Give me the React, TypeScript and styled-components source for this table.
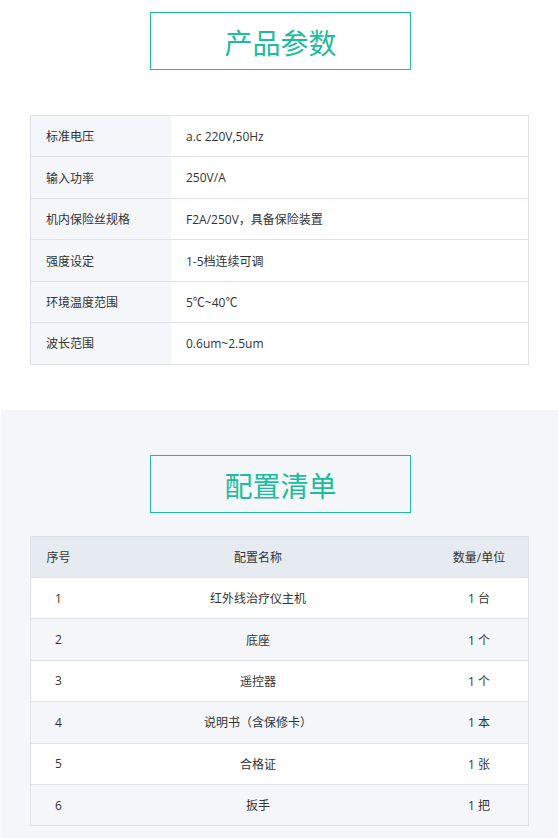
import { styled, createGlobalStyle } from 'styled-components'

const GlobalStyle = createGlobalStyle`
  html, body {
    margin: 0;
    padding: 0;
    background: #ffffff;
    font-family: 'Open Sans', 'Noto Sans CJK SC', sans-serif;
    color: #333333;
  }
`

const params = [
  ['标准电压', 'a.c 220V,50Hz'],
  ['输入功率', '250V/A'],
  ['机内保险丝规格', 'F2A/250V，具备保险装置'],
  ['强度设定', '1-5档连续可调'],
  ['环境温度范围', '5℃~40℃'],
  ['波长范围', '0.6um~2.5um'],
]

const items = [
  ['1', '红外线治疗仪主机', '1 台'],
  ['2', '底座', '1 个'],
  ['3', '遥控器', '1 个'],
  ['4', '说明书（含保修卡）', '1 本'],
  ['5', '合格证', '1 张'],
  ['6', '扳手', '1 把'],
]

const App = () => {
  return (
    <Page>
      <GlobalStyle />
      <Section>
        <Title>产品参数</Title>
        <Table>
          {params.map(([k, v]) => (
            <ParamRow key={k}>
              <Label>{k}</Label>
              <Value>{v}</Value>
            </ParamRow>
          ))}
        </Table>
      </Section>
      <Section $gray>
        <Title $gray>配置清单</Title>
        <Table $gray>
          <ListRow $head>
            <Cell>序号</Cell>
            <Cell>配置名称</Cell>
            <Cell>数量/单位</Cell>
          </ListRow>
          {items.map(([n, name, qty], idx) => (
            <ListRow key={n} $alt={idx % 2 === 1}>
              <Cell>{n}</Cell>
              <Cell>{name}</Cell>
              <Cell>{qty}</Cell>
            </ListRow>
          ))}
        </Table>
      </Section>
    </Page>
  )
}

export default App

const Page = styled.div`
  width: 558px;
  display: flex;
  flex-direction: column;
`

const Section = styled.div<{ $gray?: boolean }>`
  background: ${props => (props.$gray ? '#f5f6fa' : '#ffffff')};
  margin-left: ${props => (props.$gray ? '1px' : '0')};
  padding: ${props => (props.$gray ? '45px 0 12px' : '12px 0 45px')};
  display: flex;
  flex-direction: column;
`

// the gray section is shifted 1px right, so inner offsets drop by 1
const Title = styled.div<{ $gray?: boolean }>`
  box-sizing: border-box;
  width: 261px;
  height: 58px;
  margin-left: ${props => (props.$gray ? '149px' : '150px')};
  margin-bottom: ${props => (props.$gray ? '23px' : '45px')};
  border: 1px solid #1dbc9c;
  color: #1dbc9c;
  font-family: 'Noto Sans CJK SC', sans-serif;
  font-size: 28px;
  line-height: 58px;
  text-align: center;
`

const Table = styled.div<{ $gray?: boolean }>`
  box-sizing: border-box;
  width: 499px;
  margin-left: ${props => (props.$gray ? '29px' : '30px')};
  border: 1px solid #dde1e8;
  border-bottom: none;
  font-size: 12px;
`

const ParamRow = styled.div`
  display: grid;
  grid-template-columns: 140px 1fr;
  height: 41.45px;
  box-sizing: border-box;
  border-bottom: 1px solid #dde1e8;
`

const Label = styled.div`
  background: #f5f6fa;
  padding: 0 15px;
  display: flex;
  align-items: center;
`

const Value = styled.div`
  background: #ffffff;
  padding: 0 15px;
  display: flex;
  align-items: center;
`

const ListRow = styled.div<{ $head?: boolean; $alt?: boolean }>`
  display: grid;
  grid-template-columns: 55px 1fr 98px;
  height: 41.4px;
  box-sizing: border-box;
  border-bottom: 1px solid #dde1e8;
  background: ${props => (props.$head ? '#e6eaf1' : props.$alt ? '#f5f6fa' : '#ffffff')};
`

const Cell = styled.div`
  display: flex;
  align-items: center;
  justify-content: center;
  white-space: nowrap;
`
